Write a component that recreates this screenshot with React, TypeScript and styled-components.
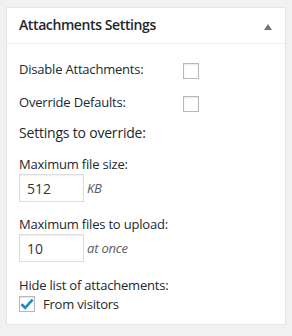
import React from 'react';
import styled, { createGlobalStyle } from 'styled-components';

const GlobalStyle = createGlobalStyle`
  html, body {
    margin: 0;
    padding: 0;
    background: #f1f1f1;
  }
  body {
    font-family: 'Open Sans', 'Noto Sans', sans-serif;
    font-size: 13px;
    letter-spacing: -0.2px;
    color: #23282d;
  }
`;

const Page = styled.div`
  padding: 7px 6px 0 6px;
  width: 280px;
`;

const Box = styled.div`
  background: #fff;
  border: 1px solid #e5e5e5;
  box-shadow: 0 1px 1px rgba(0, 0, 0, 0.04);
`;

const Header = styled.div`
  display: flex;
  align-items: center;
  justify-content: space-between;
  height: 35px;
  padding: 0 13px 0 12px;
  border-bottom: 1px solid #eee;
`;

const Title = styled.h2`
  margin: -1px 0 0 0;
  font-size: 14px;
  font-weight: 600;
  line-height: 20px;
  letter-spacing: -0.4px;
  color: #23282d;
`;

const Toggle = styled.button`
  display: flex;
  align-items: center;
  justify-content: center;
  width: 8px;
  height: 6px;
  margin-top: 3px;
  padding: 0;
  border: 0;
  background: none;
  color: #72777c;
`;

const Body = styled.div`
  padding: 15px 12px 10px 12px;
`;

const CheckRow = styled.label`
  display: grid;
  grid-template-columns: 164px 16px;
  align-items: center;
  height: 20px;
  margin-bottom: 13px;
  line-height: 20px;
`;

const RowLabel = styled.span`
  padding-bottom: 4px;
`;

const Heading = styled.div<{ $gap?: number; $large?: boolean }>`
  line-height: 20px;
  font-size: ${p => (p.$large ? 14 : 13)}px;
  margin-top: ${p => p.$gap ?? 0}px;
`;

const Box16 = styled.span`
  display: flex;
  align-items: center;
  justify-content: center;
  width: 16px;
  height: 16px;
  box-sizing: border-box;
  border: 1px solid #b4b9be;
  background: #fff;
  box-shadow: inset 0 1px 2px rgba(0, 0, 0, 0.1);
  color: #1e8cbe;
`;

const InputRow = styled.div`
  display: flex;
  align-items: center;
  gap: 3px;
`;

const NumberInput = styled.input`
  box-sizing: border-box;
  width: 65px;
  height: 28px;
  margin: 0;
  padding: 0 7px;
  border: 1px solid #ddd;
  border-radius: 0;
  box-shadow: inset 0 1px 2px rgba(0, 0, 0, 0.07);
  background: #fff;
  font-family: inherit;
  font-size: 14px;
  color: #32373c;
  outline: none;
`;

const Unit = styled.em`
  font-size: 13px;
  color: #555d66;
`;

const OptionRow = styled.label`
  display: flex;
  align-items: center;
  gap: 8px;
  height: 20px;
  margin-top: -1px;
`;

const Check = () => (
  <svg width="14" height="12" viewBox="0 0 14 12" aria-hidden="true">
    <path d="M1.5 6.2 L5.2 9.8 L12.6 1.6" fill="none" stroke="currentColor" strokeWidth="2.6" />
  </svg>
);

const Caret = () => (
  <svg width="8" height="6" viewBox="0 0 8 6" aria-hidden="true">
    <path d="M4 0 L8 6 L0 6 Z" fill="currentColor" />
  </svg>
);

export default function App() {
  return (
    <>
      <GlobalStyle />
      <Page>
        <Box>
          <Header>
            <Title>Attachments Settings</Title>
            <Toggle aria-label="Toggle panel">
              <Caret />
            </Toggle>
          </Header>
          <Body>
            <CheckRow>
              <RowLabel>Disable Attachments:</RowLabel>
              <Box16 />
            </CheckRow>
            <CheckRow>
              <RowLabel>Override Defaults:</RowLabel>
              <Box16 />
            </CheckRow>

            <Heading $gap={-2} $large>
              Settings to override:
            </Heading>

            <Heading $gap={11}>Maximum file size:</Heading>
            <InputRow>
              <NumberInput defaultValue="512" />
              <Unit>KB</Unit>
            </InputRow>

            <Heading $gap={12}>Maximum files to upload:</Heading>
            <InputRow>
              <NumberInput defaultValue="10" />
              <Unit>at once</Unit>
            </InputRow>

            <Heading $gap={13}>Hide list of attachements:</Heading>
            <OptionRow>
              <Box16>
                <Check />
              </Box16>
              <span>From visitors</span>
            </OptionRow>
          </Body>
        </Box>
      </Page>
    </>
  );
}
